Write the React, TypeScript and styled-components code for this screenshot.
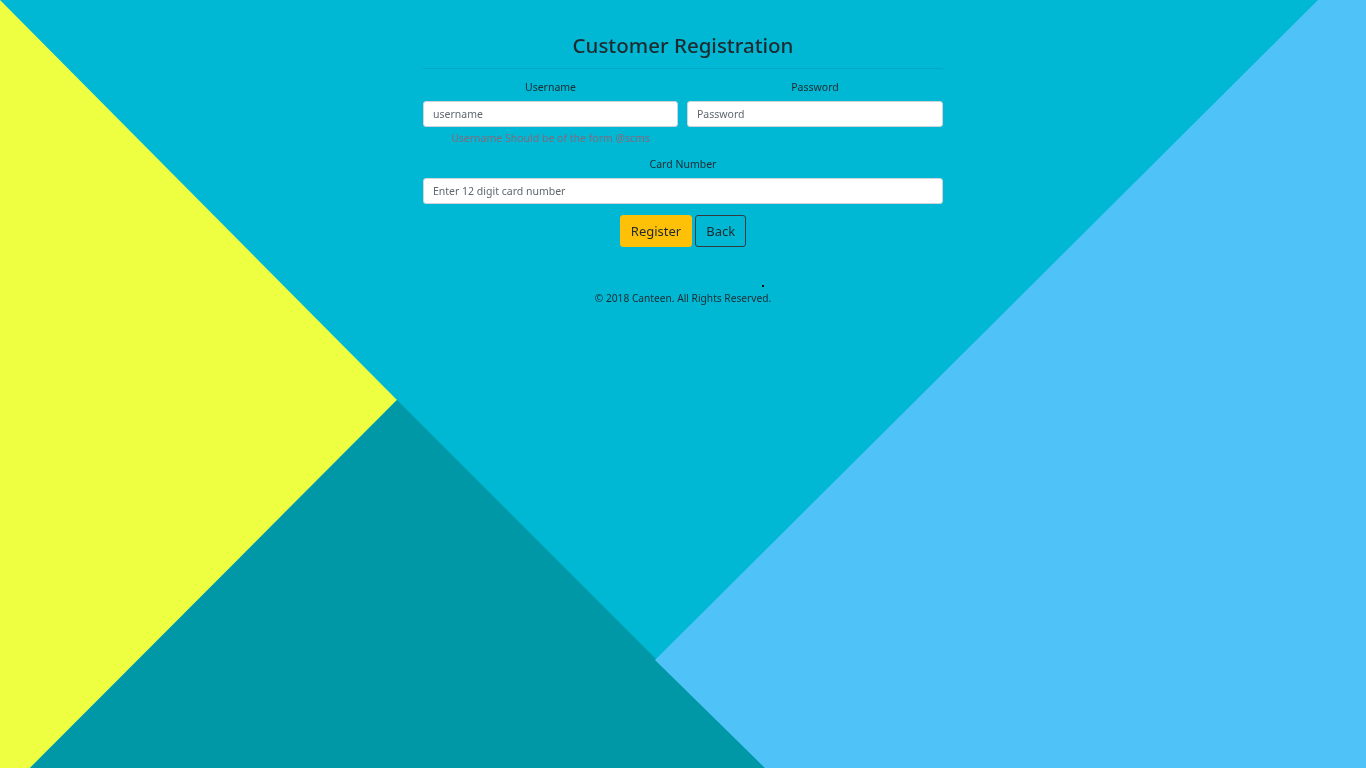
import React from "react";
import styled, { createGlobalStyle } from "styled-components";

const Global = createGlobalStyle`
  html, body { margin: 0; padding: 0; }
  body {
    background: #00b8d4;
    font-family: "Noto Sans", "Open Sans", sans-serif;
    color: #212529;
    min-height: 768px;
    overflow: hidden;
  }
`;

const Backdrop = styled.svg`
  position: fixed;
  inset: 0;
  width: 1366px;
  height: 768px;
  z-index: 0;
`;

const Page = styled.div`
  position: relative;
  z-index: 1;
  display: flex;
  flex-direction: column;
  align-items: center;
  padding-top: 30px;
`;

const Card = styled.form`
  width: 520px;
  display: flex;
  flex-direction: column;
`;

const Title = styled.h2`
  margin: 0;
  font-size: 20.5px;
  font-weight: 500;
  text-align: center;
  line-height: 30px;
  color: #1f2a30;
`;

const Rule = styled.hr`
  margin: 8px 0 10px;
  border: 0;
  border-top: 1px solid rgba(0, 0, 0, 0.08);
`;

const Row = styled.div`
  display: grid;
  grid-template-columns: 255px 256px;
  column-gap: 9px;
`;

const Field = styled.div`
  display: flex;
  flex-direction: column;
  align-items: stretch;
`;

const Label = styled.label`
  font-size: 10.5px;
  line-height: 16px;
  text-align: center;
  margin-bottom: 6px;
  color: #1f2a30;
`;

const Input = styled.input`
  box-sizing: border-box;
  height: 26px;
  width: 100%;
  border: 1px solid #ced4da;
  border-radius: 3px;
  padding: 0 9px;
  font-family: inherit;
  font-size: 10.5px;
  background: #fff;
  outline: none;
  &::placeholder { color: #5f676e; }
`;

const Hint = styled.span`
  font-size: 10.5px;
  line-height: 14px;
  margin-top: 4px;
  text-align: center;
  color: #836a7c;
`;

const CardField = styled(Field)`
  margin-top: 11px;
`;

const Actions = styled.div`
  display: flex;
  justify-content: center;
  gap: 3px;
  margin-top: 11px;
`;

const Button = styled.button<{ $primary?: boolean }>`
  height: 32px;
  padding: 0 10px;
  font-family: inherit;
  font-size: 13px;
  border-radius: 3px;
  color: #1f2a30;
  cursor: pointer;
  border: 1px solid ${(p) => (p.$primary ? "#ffc107" : "#343a40")};
  background: ${(p) => (p.$primary ? "#ffc107" : "transparent")};
`;

const Footer = styled.footer`
  position: relative;
  margin-top: 44px;
  font-size: 10.2px;
  line-height: 14px;
  text-align: center;
  color: #1f2a30;
`;

const Dot = styled.span`
  position: absolute;
  right: 7px;
  top: -6px;
  width: 2px;
  height: 2px;
  background: #111;
`;

export default function App() {
  return (
    <>
      <Global />
      <Backdrop viewBox="0 0 1366 768" preserveAspectRatio="none">
        <rect x="0" y="0" width="1366" height="768" fill="#00b8d4" />
        <polygon points="0,0 397,400 30,768 0,768" fill="#eeff41" />
        <polygon points="30,768 397,400 765,768" fill="#0097a7" />
        <polygon points="1318,0 1366,0 1366,768 765,768 655,660" fill="#4fc3f7" />
      </Backdrop>
      <Page>
        <Card onSubmit={(e) => e.preventDefault()}>
          <Title>Customer Registration</Title>
          <Rule />
          <Row>
            <Field>
              <Label>Username</Label>
              <Input placeholder="username" />
              <Hint>Username Should be of the form @scms</Hint>
            </Field>
            <Field>
              <Label>Password</Label>
              <Input type="password" placeholder="Password" />
            </Field>
          </Row>
          <CardField>
            <Label>Card Number</Label>
            <Input placeholder="Enter 12 digit card number" />
          </CardField>
          <Actions>
            <Button $primary type="submit">Register</Button>
            <Button type="button">Back</Button>
          </Actions>
        </Card>
        <Footer>
          © 2018 Canteen. All Rights Reserved.
          <Dot />
        </Footer>
      </Page>
    </>
  );
}
